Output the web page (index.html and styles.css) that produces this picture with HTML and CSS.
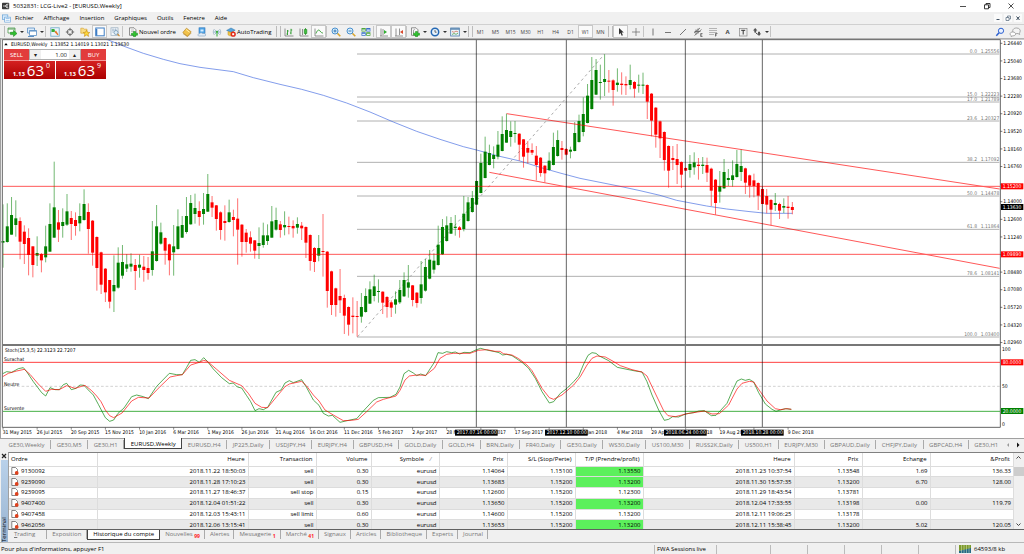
FILE: index.html
```html
<!DOCTYPE html>
<html lang="fr">
<head>
<meta charset="utf-8">
<title>5032831: LCG-Live2 - [EURUSD,Weekly]</title>
<link rel="stylesheet" href="styles.css">
</head>
<body>
<div class="app">
  <header class="titlebar">
    <svg class="app-icon" viewBox="0 0 10 10"><rect x="0" y="1" width="9" height="8" rx="1" fill="#3a3a3a"/><path d="M1.500 5h2M5 3.500l3-1M5 5h2.500M5 6.500l3 1" stroke="#fff" stroke-width="1"/><circle cx="4.500" cy="5" r="1" fill="#fff"/></svg>
    <h1 class="title">5032831: LCG-Live2 - [EURUSD,Weekly]</h1>
    <div class="win-controls">
      <button aria-label="Réduire"><svg viewBox="0 0 8 8"><path d="M1 4.500h6" stroke="#222" stroke-width=".8"/></svg></button>
      <button aria-label="Restaurer"><svg viewBox="0 0 8 8"><path d="M1.500 2.800h4v4h-4zM3 2.800V1.500h4v4H5.500" fill="none" stroke="#222" stroke-width=".9"/></svg></button>
      <button aria-label="Fermer"><svg viewBox="0 0 8 8"><path d="M1.500 1.500l5 5M6.500 1.500l-5 5" stroke="#222" stroke-width=".8"/></svg></button>
    </div>
  </header>

  <nav class="menubar">
    <svg class="menu-icon" viewBox="0 0 10 10"><rect x=".5" y="1" width="6" height="5" fill="#d8ebfb" stroke="#5b9bd5" stroke-width=".7"/><rect x="3" y="3.500" width="6.500" height="5.500" fill="#fff" stroke="#5b9bd5" stroke-width=".7"/><path d="M4 5h4.500M4 7h4.500" stroke="#7ab3e6" stroke-width=".8"/></svg>
    <button>Fichier</button><button>Affichage</button><button>Insertion</button><button>Graphiques</button><button>Outils</button><button>Fenetre</button><button>Aide</button>
    <div class="doc-controls">
      <button aria-label="Réduire le graphique"><svg viewBox="0 0 8 8"><path d="M2.500 5.500h3" stroke="#456" stroke-width="1"/></svg></button>
      <button aria-label="Restaurer le graphique"><svg viewBox="0 0 8 8"><path d="M2 3.500h3v3H2zM3.500 3.500V2h3v3H5" fill="none" stroke="#678" stroke-width=".8"/></svg></button>
      <button aria-label="Fermer le graphique"><svg viewBox="0 0 8 8"><path d="M2.500 2.500l3 3.500M5.500 2.500l-3 3.500" stroke="#345" stroke-width="1"/></svg></button>
    </div>
  </nav>

  <div class="toolbar" role="toolbar">
    <span class="grip"></span>
    <button class="drop" aria-label="Nouveau graphique"><svg viewBox="0 0 10 10"><path d="M1 1h7v5H1z" fill="#fff" stroke="#4f9a4f" stroke-width=".8"/><path d="M1 2h7" stroke="#4f9a4f"/><path d="M3.500 5.200h3V3.300L10 6.500 6.500 9.500V7.600h-3z" fill="#2fbf2f" stroke="#158015" stroke-width=".5"/></svg></button>
    <button class="drop" aria-label="Profils"><svg viewBox="0 0 10 10"><path d="M.5 1h7v5h-7z" fill="#dcecfa" stroke="#5b8fc4" stroke-width=".8"/><path d="M2.500 3.500h7v5h-7z" fill="#fff" stroke="#5b8fc4" stroke-width=".8"/><path d="M2.500 4h7M1 9.500h6" stroke="#5b8fc4"/></svg></button>
    <span class="sep"></span>
    <button aria-label="Fenêtre de marché"><svg viewBox="0 0 10 10"><rect x=".8" y=".8" width="8.400" height="8.400" fill="#eaf5fb" stroke="#6aa7c8" stroke-width=".8"/><path d="M2 4.500l1.700-2.500 1.600 2.500z" fill="#2aa52a"/><path d="M1.500 2h3v3h-3z" fill="#38ad38"/><path d="M4.500 5l1.500-1.500 2.500 4-1 .8z" fill="#e8762c"/></svg></button>
    <button aria-label="Données"><svg viewBox="0 0 10 10"><circle cx="5" cy="5" r="2.800" fill="none" stroke="#555" stroke-width=".8"/><path d="M5 .8v3M5 6.200v3M.8 5h3M6.200 5h3" stroke="#555" stroke-width=".8"/></svg></button>
    <button aria-label="Navigateur"><svg viewBox="0 0 10 10"><path d="M.8 1.200h2.500l.8 1H7v4H.8z" fill="#f8dc84" stroke="#d5a02a" stroke-width=".6"/><path d="M6.500 3.200l1 2.100 2.300.2-1.800 1.500.6 2.400-2.100-1.300-2.200 1.300.6-2.400L3.200 5.500l2.300-.2z" fill="#ffd83a" stroke="#c58d16" stroke-width=".6"/></svg></button>
    <button class="on" aria-label="Terminal"><svg viewBox="0 0 10 10"><rect x=".8" y="1" width="8.400" height="7.800" fill="#fff" stroke="#3d7cc4"/><path d="M1.500 2v6.500" stroke="#3d7cc4" stroke-width="1.600"/></svg></button>
    <button aria-label="Testeur"><svg viewBox="0 0 10 10"><rect x="1" y=".8" width="7" height="7.500" fill="#f4f8fb" stroke="#93a9bd" stroke-width=".7"/><path d="M2 3h5M3 1.500V6M5.500 1.500v3" stroke="#8aa6bf" stroke-width=".6"/><circle cx="6" cy="5.500" r="2" fill="#dfeffa" stroke="#6c8fae" stroke-width=".7"/><path d="M7.500 7l2 2.200" stroke="#c98b33" stroke-width="1.200"/></svg></button>
    <span class="sep wide"></span>
    <button class="labelled new-order"><svg viewBox="0 0 10 10"><path d="M1.500.8h4.500l2 2v5.500H1.500z" fill="#f8f8f8" stroke="#666" stroke-width=".7"/><path d="M3 3h3M3 4.500h3" stroke="#888" stroke-width=".5"/><path d="M5.500 4.500h2v1.700h2v2h-2V9.800h-2V8.200h-2v-2h2z" fill="#2fc52f" stroke="#178017" stroke-width=".5"/></svg>Nouvel ordre</button>
    <button aria-label="MetaEditor"><svg viewBox="0 0 10 10"><path d="M.8 5.500L4.500 1.200l4.700 3.600-3.700 4.400z" fill="#f2c24a" stroke="#b07c14" stroke-width=".6"/><path d="M1 6.500l4.500 3.200L9.200 6" fill="none" stroke="#c08a1c" stroke-width=".7"/><path d="M4 2.500l3.500 2.700" stroke="#fff0b0"/></svg></button>
    <button aria-label="VPS"><svg viewBox="0 0 10 10"><rect x="2" y=".8" width="6" height="5.500" fill="#4ea3e6" stroke="#2a74b8" stroke-width=".6"/><path d="M3.500 2.500h3v2h-3z" fill="#d6eeff"/><path d="M1.500 9c-1-.8-.5-2.300 1-2.300.8-1.200 2.800-1 3.300 0 1.400-.7 3 .3 2.900 1.300 0 .6-.5 1-1.200 1z" fill="#e4eef8" stroke="#7c9dbd" stroke-width=".6"/></svg></button>
    <button aria-label="Signaux"><svg viewBox="0 0 10 10"><path d="M2.500 2a4.200 4.200 0 0 0 0 6M7.500 2a4.200 4.200 0 0 1 0 6" fill="none" stroke="#9fb3c6" stroke-width=".9"/><path d="M3.700 3.300a2.500 2.500 0 0 0 0 3.500M6.300 3.300a2.500 2.500 0 0 1 0 3.500" fill="none" stroke="#6699bb" stroke-width=".8"/><circle cx="5" cy="4.800" r="1.100" fill="#35aa35"/><path d="M5 5v4.500" stroke="#35aa35"/></svg></button>
    <button class="labelled auto"><svg viewBox="0 0 10 10"><path d="M.6 3.400L5 1l4.200 2.200L5 5.200z" fill="#58a6dc" stroke="#2a6fa4" stroke-width=".5"/><path d="M2 4.500v3.300c1.500 1.400 4 1.400 5.500 0V4.500L5 5.600z" fill="#f0c648" stroke="#b88a1c" stroke-width=".5"/><circle cx="7.200" cy="7.200" r="2.600" fill="#e02818"/><path d="M6.200 6.200h2v2h-2z" fill="#fff"/></svg>AutoTrading</button>
    <span class="grip"></span>
    <button aria-label="Barres"><svg viewBox="0 0 10 10"><path d="M1 1.500v7.500M1 9h8.500" stroke="#777" stroke-width=".8"/><path d="M3.500 3v5M2.500 7h1M3.500 4h1.200M7 1.800v5.500M6 6h1M7 3h1.200" stroke="#2a9a2a" stroke-width=".9"/></svg></button>
    <button aria-label="Chandeliers"><svg viewBox="0 0 10 10"><path d="M1 1.500v7.500M1 9h8.500M3.500 2v6" stroke="#777" stroke-width=".8"/><path d="M6.500 1v7" stroke="#2a9a2a" stroke-width=".8"/><path d="M5.300 2.500h2.500v4H5.300z" fill="#3fbf3f" stroke="#1b861b" stroke-width=".6"/></svg></button>
    <button class="on" aria-label="Ligne"><svg viewBox="0 0 10 10"><path d="M1 1.500v7.500M1 9h8.500" stroke="#777" stroke-width=".8"/><path d="M2 6.500c1.500-4 3-4 4-2.500s2 2 3 2" fill="none" stroke="#2a9a2a" stroke-width=".9"/></svg></button>
    <span class="sep"></span>
    <button aria-label="Zoom avant"><svg viewBox="0 0 10 10"><path d="M6.300 6.300l3 3" stroke="#d9a52c" stroke-width="1.600"/><circle cx="4" cy="4" r="3" fill="#d8eefc" stroke="#3a86c8" stroke-width=".9"/><path d="M2.500 4h3M4 2.500v3" stroke="#2a70b0" stroke-width=".9"/></svg></button>
    <button aria-label="Zoom arrière"><svg viewBox="0 0 10 10"><path d="M6.300 6.300l3 3" stroke="#d9a52c" stroke-width="1.600"/><circle cx="4" cy="4" r="3" fill="#d8eefc" stroke="#3a86c8" stroke-width=".9"/><path d="M2.500 4h3" stroke="#2a70b0" stroke-width=".9"/></svg></button>
    <button aria-label="Mosaïque"><svg viewBox="0 0 10 10"><path d="M.5 1h4.200v3.600H.5zM5.200 5.200h4.200v3.600H5.200z" fill="#4fa63a"/><path d="M5.200 1h4.200v3.600H5.200zM.5 5.200h4.200v3.600H.5z" fill="#3a70c8"/><path d="M1.200 2.500h2.800v1.200H1.200zM6 2.500h2.800v1.200H6zM1.200 6.700h2.800v1.200H1.200zM6 6.700h2.800v1.200H6z" fill="#e8f2ff"/></svg></button>
    <span class="sep wide"></span>
    <button class="on" aria-label="Défilement"><svg viewBox="0 0 10 10"><path d="M2 1.500v7.500M1 9h8M4 2v6" stroke="#777" stroke-width=".8"/><path d="M5 3l3 2-3 2z" fill="#2fae2f"/></svg></button>
    <button class="on" aria-label="Décalage"><svg viewBox="0 0 10 10"><path d="M2 1.500v7.500M1 9h8M5.500 1.500v6.500" stroke="#777" stroke-width=".8"/><path d="M9 3L6 5l3 2z" fill="#d8482c"/></svg></button>
    <span class="sep"></span>
    <button class="drop" aria-label="Indicateurs"><svg viewBox="0 0 10 10"><path d="M1.500.8h4.500l2 2v5.500H1.500z" fill="#f8f8f8" stroke="#666" stroke-width=".7"/><path d="M4.500 2.500c-1 0-1 1-1 2v2" fill="none" stroke="#555" stroke-width=".6"/><path d="M5.500 4.500h2v1.700h2v2h-2V9.800h-2V8.200h-2v-2h2z" fill="#2fc52f" stroke="#178017" stroke-width=".5"/></svg></button>
    <button class="drop" aria-label="Périodes"><svg viewBox="0 0 10 10"><circle cx="5" cy="5" r="3.700" fill="#e9f3fc" stroke="#2468b4" stroke-width="1.500"/><path d="M5 3v2.200h1.600" fill="none" stroke="#333" stroke-width=".7"/></svg></button>
    <button class="drop" aria-label="Modèles"><svg viewBox="0 0 10 10"><rect x=".7" y="1" width="8.600" height="8" fill="#eef5fb" stroke="#4678a8" stroke-width=".8"/><path d="M.7 2h8.600" stroke="#4678a8" stroke-width="1.300"/><path d="M2 4.500l2 .8 2-1.200 2 .8" fill="none" stroke="#d06040" stroke-width=".7"/><path d="M2 7.500l2-1 2 .8 2-1" fill="none" stroke="#3c9a3c" stroke-width=".7"/></svg></button>
    <span class="grip"></span>
    <button class="tf">M1</button><button class="tf">M5</button><button class="tf">M15</button><button class="tf">M30</button><button class="tf">H1</button><button class="tf">H4</button><button class="tf">D1</button><button class="tf on">W1</button><button class="tf">MN</button>
    <span class="grip"></span>
    <button class="on" aria-label="Curseur"><svg viewBox="0 0 10 10"><path d="M3 1l4.800 4.500H5.700l1.200 2.800-1.200.5-1.200-2.800L3 7.500z" fill="#333"/></svg></button>
    <button aria-label="Réticule"><svg viewBox="0 0 10 10"><path d="M5 1v8M1 5h8" stroke="#666" stroke-width=".7"/></svg></button>
    <span class="sep"></span>
    <button aria-label="Ligne verticale"><svg viewBox="0 0 10 10"><path d="M5 1.500v7" stroke="#555" stroke-width=".8"/></svg></button>
    <button aria-label="Ligne horizontale"><svg viewBox="0 0 10 10"><path d="M2 5.500h6" stroke="#555" stroke-width=".8"/></svg></button>
    <button aria-label="Ligne de tendance"><svg viewBox="0 0 10 10"><path d="M2 8l6-6" stroke="#555" stroke-width=".8"/></svg></button>
    <button aria-label="Canal"><svg viewBox="0 0 10 10"><path d="M1 6l6-5M1.500 8.500l7-6M3 2.500v5M5 1.500v5M1.500 4.500h6" stroke="#555" stroke-width=".7"/><path d="M9.500 6.500H7.700v3h1.800M7.700 8h1.500" fill="none" stroke="#333" stroke-width=".6"/></svg></button>
    <button aria-label="Fibonacci"><svg viewBox="0 0 10 10"><path d="M1 1.500h8M1 3.500h8M1 5.500h8M1 7.500h5" stroke="#999" stroke-width=".7"/><path d="M9.500 6.500H7.500v3M7.500 8h1.500" fill="none" stroke="#333" stroke-width=".6"/></svg></button>
    <button class="letter" aria-label="Texte">A</button>
    <button aria-label="Étiquette"><svg viewBox="0 0 10 10"><rect x="1.500" y="1.500" width="7.500" height="7.500" fill="none" stroke="#888" stroke-width=".7"/><path d="M3.200 3.300h4M5.200 3.300v4.200" stroke="#333"/></svg></button>
    <button class="drop" aria-label="Flèches"><svg viewBox="0 0 10 10"><path d="M1 3.500L3.200 1l2.200 2.500H4.200v2H2.300v-2zM5 6.500h1V4.700h2v1.800h1.200L7 9z" fill="#555"/><path d="M3.500 5.500l2 2" stroke="#555"/></svg></button>
    <span class="sep line"></span>
    <div class="toolbar-right">
      <button aria-label="Rechercher"><svg viewBox="0 0 10 10"><circle cx="6" cy="3.800" r="2.600" fill="#eaf2ff" stroke="#2a5fd0" stroke-width="1"/><path d="M4 5.800L1.300 8.700" stroke="#2a5fd0" stroke-width="1.500"/></svg></button>
      <button aria-label="Messages"><svg viewBox="0 0 12 10"><path d="M4 5.500c-1-2.500.5-4.500 3.500-4.500S11.800 3 11 5c-.3.800-.7 1.300-.3 2.500L9 6.500c-1 .2-1.500.1-2 0" fill="#f4f4f4" stroke="#888" stroke-width=".7"/><path d="M1 7c0-1.400 1.300-2 2.800-2s2.800.7 2.800 2-1.300 1.800-2.800 1.800L2.200 9.600V8.500C1.500 8.200 1 7.700 1 7z" fill="#fff" stroke="#888" stroke-width=".7"/></svg></button>
    </div>
  </div>

  <main class="chart">
    <svg class="plot" viewBox="0 114 3072 1200" preserveAspectRatio="xMinYMin meet" role="img" aria-label="EURUSD hebdomadaire">
      <rect x="0" y="114" width="3072" height="5" fill="#b4b4b4"/>
      <rect x="0" y="114" width="3" height="1200" fill="#a0a0a0"/>
      <g id="fib"></g>
      <g fill="none" stroke="#4169e1" stroke-width="3" opacity=".65">
        <path d="M320 118L375 140 430 160 490 178 540 191 600 202 700 215 760 233 840 253 905 268 970 286 1040 309 1110 336 1180 366 1250 394 1320 418 1390 440 1430 450 1495 468 1560 483 1620 502 1680 519 1740 535 1800 547 1860 559 1920 572 1980 586 2030 601 2120 618 2180 627 2250 635 2300 640 2377 640"/>
      </g>
      <path d="M1073 1010L1813 163" stroke="#aaa" stroke-width="3" stroke-dasharray="8 9" fill="none"/>
      <g id="candles"></g>
      <g stroke="#f00" stroke-width="3" opacity=".65"><path d="M1520 341L2999 567M1468 517L2999 805"/><path d="M9 559H3000M9 763H3000"/></g>
      <g fill="none" stroke-width="3">
        <path d="M9 1087H3000" stroke="#ff4040"/><path d="M9 1159H3000" stroke="#bbb" stroke-width="2" stroke-dasharray="8 6"/><path d="M9 1234H3000" stroke="#45b045"/>
      </g>
      <g id="stoch" fill="none" stroke-width="3" stroke-linejoin="round"></g>
      <path d="M1429 119V1281M1699 119V1281M2056 119V1281M2287 119V1281" stroke="#000" stroke-width="3" opacity=".6"/>
      <path d="M7 119V1282M7 119H3001V1282H7" fill="none" stroke="#666" stroke-width="3"/>
      <path d="M7 1035H3001" stroke="#777" stroke-width="6"/>
      <g id="axis" class="axis"></g>
      <g class="axis">
        <text x="15" y="1056">Stoch(15,3,5) 22.3123 22.7207</text><text x="12" y="1084">Surachat</text><text x="12" y="1157">Neutre</text><text x="12" y="1230">Survente</text>
        <path d="M13 136l5-7 5 7z"/><text x="33" y="137">EURUSD,Weekly&#160; 1.13852 1.14019 1.13021 1.13630</text>
      </g>
    </svg>
    <form class="one-click">
      <button type="button" class="side">SELL</button>
      <div class="volume"><button type="button" aria-label="Moins">▾</button><input type="text" value="1.00" aria-label="Volume"><button type="button" aria-label="Plus">▴</button></div>
      <button type="button" class="side">BUY</button>
      <div class="quote"><span class="small">1.13</span><span class="big">63</span><span class="sup">0</span></div>
      <div class="quote"><span class="small">1.13</span><span class="big">63</span><span class="sup">9</span></div>
    </form>
  </main>

  <nav class="chart-tabs">
    <button>GE30,Weekly</button><button>GE30,M5</button><button>GE30,H1</button><button class="current">EURUSD,Weekly</button><button>EURUSD,H4</button><button>JP225,Daily</button><button>USDJPY,H4</button><button>EURJPY,H4</button><button>GBPUSD,H4</button><button>GOLD,Daily</button><button>GOLD,H4</button><button>BRN,Daily</button><button>FR40,Daily</button><button>GE30,Daily</button><button>WS30,Daily</button><button>US100,M30</button><button>RUSS2K,Daily</button><button>US500,H1</button><button>EURJPY,M30</button><button>GBPAUD,Daily</button><button>CHFJPY,Daily</button><button>GBPCAD,H4</button><button>GE30,H1</button>
    <span class="tab-scroll"><button class="dim" aria-label="Précédent"><svg viewBox="0 0 8 8"><path d="M5 2L3 4l2 2z" fill="#999"/></svg></button><button aria-label="Suivant"><svg viewBox="0 0 8 8"><path d="M3 1.500L5.500 4 3 6.500z" fill="#111"/></svg></button></span>
  </nav>

  <section class="terminal">
    <div class="handle">
      <button aria-label="Fermer le terminal"><svg viewBox="0 0 8 8"><path d="M2 2l4 4M6 2L2 6" stroke="#222" stroke-width="1.200"/></svg></button>
      <span>Terminal</span>
    </div>
    <div class="panel">
      <div class="history">
        <div class="table-wrap">
        <table>
          <colgroup><col class="c9"><col class="c15"><col class="c7"><col class="c5"><col class="c7"><col class="c7"><col class="c7"><col class="c7"><col class="c15"><col class="c7"><col class="c7"><col class="c8"></colgroup>
          <thead><tr><th>Ordre</th><th>Heure</th><th>Transaction</th><th>Volume</th><th>Symbole <i>/</i></th><th>Prix</th><th>S/L (Stop/Perte)</th><th>T/P (Prendre/profit)</th><th>Heure</th><th>Prix</th><th>Echange</th><th>&amp;Profit</th></tr></thead>
          <tbody id="orders"></tbody>
        </table>
        </div>
        <div class="scroll"><svg viewBox="0 0 9 9"><path d="M2.500 5.500l2-2 2 2" fill="none" stroke="#444"/></svg><span class="thumb"></span><svg viewBox="0 0 9 9"><path d="M2.500 3.500l2 2 2-2" fill="none" stroke="#444"/></svg></div>
      </div>
      <nav class="term-tabs">
        <button class="first"><u>T</u>rading</button><button>Exposition</button><button class="current">Historique du compte</button><button>Nouvelles <b>99</b></button><button>Alertes</button><button>Messagerie <b>1</b></button><button>Marché <b>41</b></button><button>Signaux</button><button>Articles</button><button>Bibliotheque</button><button>Experts</button><button>Journal</button>
      </nav>
    </div>
  </section>

  <footer class="status">
    <span class="help">Pour plus d'informations, appuyer F1</span>
    <span class="profile">FWA Sessions live</span>
    <span class="cell"></span><span class="cell"></span><span class="cell"></span><span class="cell"></span><span class="cell"></span><span class="cell"></span>
    <span class="net"><svg viewBox="0 0 12 8"><path d="M0 0h12v4L0 6z" fill="#7d9a2c"/><path d="M0 6l12-3v5H0z" fill="#256a86"/><path d="M2.500 0v8M5 0v8M7.500 0v8M10 0v8" stroke="#dfe8c8" stroke-width=".5"/></svg>64593/8 kb</span>
  </footer>
</div>
<script src="chart.js"></script>
</body>
</html>
```
FILE: styles.css
```css
* { box-sizing: border-box; }

body {
  margin: 0;
  background: #f0f0f0;
  color: #000;
  font: 6px/10px "Open Sans", "Noto Sans", sans-serif;
}

button, input {
  margin: 0;
  padding: 0;
  border: 0;
  background: none;
  color: inherit;
  font: inherit;
}

.app {
  display: flex;
  flex-direction: column;
  height: 100vh;
  overflow: hidden;
}

/* Title and menu */
.titlebar {
  display: flex;
  align-items: center;
  flex: none;
  height: 12px;
  padding-left: 2px;
  background: #fff;
}
.app-icon { width: 8px; height: 8px; }
.title { margin: 0 0 0 3px; font-size: 6px; font-weight: 400; }
.win-controls { display: flex; gap: 16px; margin-left: auto; padding-right: 9px; }
.win-controls svg, .doc-controls svg { display: block; width: 8px; height: 8px; }

.menubar {
  display: flex;
  align-items: center;
  flex: none;
  height: 12px;
  padding-left: 2px;
}
.menu-icon { width: 9px; height: 9px; margin-right: 4px; }
.menubar > button { margin-right: 10px; }
.doc-controls { display: flex; gap: 2px; margin-left: auto; padding-right: 2px; }
.doc-controls button { background: #fafafa; }

/* Toolbar */
.toolbar {
  display: flex;
  align-items: center;
  flex: none;
  height: 14px;
  border-top: 1px solid #d0d0d0;
}
.toolbar button {
  display: flex;
  align-items: center;
  justify-content: center;
  flex: none;
  width: 15px;
  height: 13px;
}
.toolbar svg { flex: none; width: 10px; height: 10px; }
.toolbar .on { border: 1px solid #c8c8c8; background: #fafafa; }
.toolbar .drop { width: 20px; gap: 3px; }
.toolbar .drop::after {
  content: "";
  border: 2px solid transparent;
  border-top-color: #333;
  border-bottom: 0;
}
.toolbar .labelled { justify-content: flex-start; gap: 1px; padding-left: 3px; }
.toolbar .new-order { width: 54px; }
.toolbar .auto { width: 52px; padding-left: 2px; }
.toolbar .tf { color: #444; font-size: 5px; }
.toolbar .letter { color: #444; font-weight: 700; }
.grip { flex: none; width: 5px; height: 11px; border-left: 1px solid #bbb; border-right: 1px solid #bbb; }
.grip:first-child { border-left-color: transparent; }
.sep { flex: none; width: 2px; height: 11px; border-left: 1px solid #c4c4c4; }
.sep.wide { width: 3px; }
.toolbar-right { display: flex; margin-left: auto; padding-right: 2px; }
.toolbar-right button:last-child svg { width: 12px; }

/* Chart */
.chart {
  position: relative;
  flex: 1;
  min-height: 0;
  background: #fff;
}
.plot { display: block; width: 100%; height: 100%; }
.axis text, .fib text {
  font-family: "DejaVu Sans Condensed", "DejaVu Sans", sans-serif;
  font-size: 15px;
}
.fib text { fill: #777; text-anchor: end; }
.axis .tag { fill: #fff; }

.one-click {
  position: absolute;
  top: 11px;
  left: 4px;
  display: grid;
  grid-template: 12px 18px / 25px 26px 26px 25px;
  width: 103px;
  color: #fff;
}
.side { background: #e23c3c; border-bottom: 1px solid #f39a9a; }
.volume {
  display: flex;
  grid-column: 2 / 4;
  height: 11px;
  border: 1px solid #b0b0b0;
  background: #f0f0f0;
  color: #222;
}
.volume button { width: 11px; }
.volume input { flex: 1; min-width: 0; padding-right: 2px; background: #fff; text-align: right; }
.quote {
  display: flex;
  align-items: flex-end;
  justify-content: flex-end;
  grid-column: span 2;
  gap: 2px;
  height: 18px;
  padding-right: 5px;
  background: linear-gradient(#d42020, #ac0000);
}
.quote + .quote { border-left: 1px solid #fff; }
.quote .small { font-weight: 700; }
.quote .big { font-size: 15px; line-height: 18px; }
.quote .sup { align-self: flex-start; font-size: 7px; }

/* Chart tabs */
.chart-tabs {
  display: flex;
  flex: none;
  height: 12px;
  padding: 1px 2px 1px 3px;
  border-top: 1px solid #a0a0a0;
}
.chart-tabs > button {
  flex: 1 0 auto;
  border-right: 1px solid #aaa;
  color: #777;
  line-height: 10px;
}
.chart-tabs > button.current {
  margin-top: -2px;
  padding-top: 1px;
  border: 1px solid #444;
  border-top: 0;
  background: #fff;
  color: #000;
}
.chart-tabs > button:nth-last-child(2) { border-right: 0; }
.tab-scroll { display: flex; align-items: center; gap: 2px; }
.tab-scroll svg { display: block; width: 8px; height: 8px; }

/* Terminal */
.terminal { display: flex; flex: none; height: 92px; padding-top: 2px; }
.handle {
  display: flex;
  flex-direction: column;
  align-items: center;
  flex: none;
  width: 8px;
}
.handle button { height: 8px; }
.handle svg { display: block; width: 8px; height: 8px; }
.handle span {
  flex: 1;
  width: 7px;
  background: linear-gradient(#99b4d1, #b9d1ea);
  line-height: 7px;
  writing-mode: vertical-rl;
  transform: rotate(180deg);
}
.panel { display: flex; flex-direction: column; flex: 1; min-width: 0; }
.history {
  display: flex;
  flex: none;
  height: 78px;
  border-top: 1px solid #808080;
  border-bottom: 1px solid #606060;
  border-left: 1px solid #a0a0a0;
  background: #fff;
}
.table-wrap { flex: 1; min-width: 0; overflow: hidden; }
table { width: 100%; height: 77px; border-collapse: collapse; table-layout: fixed; }
.c9 { width: 88px; }
.c15 { width: 151px; }
.c7 { width: 68px; }
.c5 { width: 55px; }
.c8 { width: auto; }
th, td { padding: 0 2px; border-right: 1px solid #ddd; text-align: right; white-space: nowrap; }
th { height: 13px; padding-right: 3px; font-weight: 400; }
th i { margin: 0 4px; color: #888; }
th:first-child, td:first-child { text-align: left; }
td { line-height: 9px; }
tbody tr { border-top: 1px solid #dcdcdc; }
tbody tr:nth-child(even) { background: #e9e9e9; }
td.hit { background: #5cf05c; }
td svg { width: 8px; height: 8px; margin-right: 2px; vertical-align: top; }
.scroll {
  display: flex;
  flex-direction: column;
  flex: none;
  width: 10px;
  background: #f0f0f0;
}
.scroll svg { width: 9px; height: 9px; }
.scroll svg:last-child { margin-top: auto; }
.thumb { height: 9px; margin-top: 5px; background: #cdcdcd; }

.term-tabs { display: flex; height: 11px; }
.term-tabs button {
  position: relative;
  height: 9px;
  padding: 0 5px;
  border-right: 1px solid #aaa;
  color: #777;
  line-height: 9px;
}
.term-tabs .first { padding: 0 11px 0 6px; }
.term-tabs .current {
  height: 10px;
  border: 1px solid #444;
  border-top: 0;
  background: #fff;
  color: #000;
}
.term-tabs .current ~ button { padding-right: 4px; }
.term-tabs b { color: #f22; font-size: 5px; vertical-align: sub; line-height: 5px; }

/* Status bar */
.status {
  display: flex;
  align-items: center;
  flex: none;
  height: 12px;
  padding: 1px 0 0 1px;
  border-top: 1px solid #b8b8b8;
}
.help { flex: 1; }
.profile, .cell, .net { flex: none; height: 9px; border-left: 1px solid #bbb; line-height: 9px; }
.profile { width: 62px; padding-left: 2px; }
.cell { width: 37px; }
.profile + .cell { width: 54px; }
.cell:nth-last-child(2) { width: 37px; }
.net { display: flex; align-items: center; gap: 3px; width: 69px; padding-left: 3px; }
.net svg { width: 12px; height: 8px; }
```
FILE: chart.js
```js
const NS = 'http://www.w3.org/2000/svg';

function add(parent, name, attrs, text) {
  const el = document.createElementNS(NS, name);
  for (const key in attrs) el.setAttribute(key, attrs[key]);
  if (text !== undefined) el.textContent = text;
  parent.appendChild(el);
  return el;
}

const byId = id => document.getElementById(id);
const WEEK = 12.8;
const barX = i => 9 + i * WEEK;

/* Weekly bars: direction, high, body top, body bottom, low, relative to the run's base. */
const runs = [
  { first: 0, base: 450, bars: `g163 273 278 353,g160 229 276 278,g141 195 254 254,g151 205 225 260,r202 213 275 328,r226 245 282 342,r235 264 315 376,r289 289 345 382,g259 309 317 348,r309 312 331 367,g227 289 322 337,g160 222 305 305,g35 172 263 263,r180 217 239 276,g175 216 228 263,g132 184 224 228,r183 204 222 270,r187 210 228 257,g160 198 220 244,g118 162 210 212,r160 186 237 311,r210 212 308 347,r259 261 354 422,r305 307 404 432,r354 356 427 456,r390 390 455 475,g316 405 424 486,g292 338 413 416,g285 336 377 386,g312 343 356 366,g310 341 350 365,r327 345 363 420,g314 344 353 383,r318 350 360 395,r321 354 369 389,g213 304 360 377,g165 229 333 335,g218 247 281 284,r262 264 302 344,r281 283 331 376,g225 289 307 377,g178 229 297 299,g198 225 263 264,g141 198 246 251,g135 159 223 224,g131 174 192 221,r154 183 201 227,g129 177 192 224,g72 132 185 186,r138 157 173 201,r165 166 207 242,r184 187 240 269,r166 213 219 272,g149 187 216 218,r179 201 210 259,r145 206 239 344,r222 224 276 320,r237 248 276 308,r244 262 281 305,r270 271 302 326` },
  { first: 60, base: 570, bars: `g112 159 168 207,g98 136 165 173,g103 136 153 165,g48 94 143 143,g53 90 119 122,r93 103 120 143,g64 105 112 136,r80 108 111 133,r91 108 115 143,g82 102 113 131,r96 107 115 150,r109 111 158 204,r133 135 213 242,r171 174 216 246,g135 174 197 214,r72 183 186 260,r183 185 303 353,r242 244 345 375,r293 295 345 380,r237 318 331 369,r314 324 377 432,r349 351 404 437,r322 377 381 430,r333 378 381 440,g309 351 380 398,g295 318 366 368,g274 298 341 342,g254 289 318 334,g268 303 306 338,r304 305 338 372,r318 321 351 383,r331 337 353 381,g304 328 344 371,g270 300 337 342,g247 270 319 321,g225 277 293 323,r285 286 330 349,r306 308 339 353,g213 283 324 341,g207 231 302 305,g180 209 266 268,g190 212 239 251,g107 164 225 227,g87 111 193 195,g79 106 153 155,g81 99 131 132,g75 110 114 137,r108 112 120 143,g18 71 117 124,g21 37 93 95,g3 24 66 68` },
  { first: 111, base: 150, bars: `g392 393 464 464,g311 339 429 430,g260 305 384 385,g284 309 345 346,g289 315 327 355,g243 284 320 328,g199 252 303 304,g191 240 278 278,g214 243 261 290,g213 249 252 278,r250 251 284 332,r267 268 320 353,r273 294 308 340,r280 300 308 315,r288 317 345 391,r321 323 369 380,r345 347 370 397,g307 332 360 363,g248 291 345 346,g241 270 318 320,r273 294 300 329,r294 297 314 316,g290 299 305 325,g216 249 303 304,g194 213 276 278,g142 192 246 259,g102 137 219 220,g21 90 177 179,g27 60 134 135,g44 96 99 149,g13 87 96 138,r60 92 95 128,r88 91 120 167,g55 98 105 125,r67 101 105 134,r79 102 106 135,g44 90 105 118,r93 96 116 143,g74 104 107 128,g68 104 107 132,r103 105 155 207,r129 131 212 259,r171 173 254 293,r212 214 265 324,r244 246 330 362,r286 288 362 413,r288 324 330 360` },
  { first: 158, base: 240, bars: `r192 237 255 312,r244 246 284 324,r262 264 272 272,g225 252 270 293,g217 247 262 284,r234 254 258 299,g231 254 258 282,r233 255 278 306,r263 266 332 378,r297 299 369 404,g273 318 335 368,g237 276 325 327,g267 294 300 318,g241 286 300 320,g210 252 291 293,g208 258 276 303,r263 265 308 342,r284 286 317 353,r281 301 318 352,r307 309 347 390,r320 327 372 372,r327 348 374 400,r357 360 389 436,g339 369 375 393,r368 372 392 417,g355 378 383 399,r348 380 384 416,r366 381 390 403` }
];

for (const run of runs) {
  run.bars.split(',').forEach((bar, n) => {
    const color = bar[0] === 'g' ? '#008000' : '#ff0000';
    const [high, top, bottom, low] = bar.slice(1).split(' ').map(v => Number(v) + run.base);
    const x = barX(run.first + n);
    add(byId('candles'), 'path', { d: `M${x} ${high}V${low}`, stroke: color, 'stroke-width': 3, opacity: 0.55 });
    add(byId('candles'), 'rect', { x: x - 4.5, y: top, width: 9, height: Math.max(3, bottom - top), fill: color });
  });
}

/* Fibonacci retracement */
const fib = byId('fib');
fib.setAttribute('class', 'fib');
[[162, '0.0', '1.25556'], [291, '15.0', '1.22223'], [306, '17.0', '1.21789'], [363, '23.6', '1.20327'], [487, '38.2', '1.17092'],
 [588, '50.0', '1.14478'], [688, '61.8', '1.11864'], [829, '78.6', '1.08141'], [1011, '100.0', '1.03400']].forEach(([y, ratio, price]) => {
  add(fib, 'path', { d: `M1071 ${y}H2998`, stroke: '#b0b0b0', 'stroke-width': 3 });
  add(fib, 'text', { x: 2931, y: y - 3 }, ratio);
  add(fib, 'text', { x: 2998, y: y - 3 }, price);
});

/* Price scale */
const axis = byId('axis');
function tag(x, y, width, fill, label) {
  add(axis, 'rect', { x, y: y - 9, width, height: 18, fill });
  add(axis, 'text', { x: x + 5, y: y + 5, class: 'tag' }, label);
}
['1.26440', '1.25040', '1.23680', '1.22280', '1.20920', '1.19520', '1.18160', '1.16760', '', '1.14000', '1.12600', '1.11240', '',
 '1.08480', '1.07080', '1.05720', '1.04320', '1.02960'].forEach((label, n) => {
  const y = 130 + n * 52.8;
  add(axis, 'path', { d: `M3001 ${y}h6`, stroke: '#333', 'stroke-width': 2 });
  add(axis, 'text', { x: 3010, y: y + 5 }, label);
});
[['100', 1048], ['50', 1160], ['0', 1272]].forEach(([label, y]) => add(axis, 'text', { x: 3006, y: y + 5 }, label));
tag(3003, 559, 67, '#f00', '1.15200');
tag(3003, 621, 67, '#000', '1.13630');
tag(3003, 763, 67, '#f00', '1.09890');
tag(3003, 1087, 67, '#f00', '80.0000');
tag(3003, 1233, 67, '#008000', '20.0000');

/* Time scale, one label every eight weeks; slots fully behind a line's date tag stay empty */
['31 May 2015', '26 Jul 2015', '20 Sep 2015', '15 Nov 2015', '10 Jan 2016', '6 Mar 2016', '1 May 2016', '26 Jun 2016', '21 Aug 2016',
 '16 Oct 2016', '11 Dec 2016', '5 Feb 2017', '2 Apr 2017', '28 May 2017', '23 Jul 2017', '17 Sep 2017', '', '7 Jan 2018',
 '4 Mar 2018', '29 Apr 2018', '24 Jun 2018', '19 Aug 2018', '', '9 Dec 2018'].forEach((label, n) => {
  const x = barX(n * 8);
  add(axis, 'path', { d: `M${x} 1282v7`, stroke: '#555', 'stroke-width': 2 });
  add(axis, 'text', { x: x - 1, y: 1303 }, label);
});
[[1365, '2017.07.16 00:00'], [1635, '2017.12.10 00:00'], [1992, '2018.06.24 00:00'], [2223, '2018.10.28 00:00']]
  .forEach(([x, label]) => tag(x, 1298, 128, '#000', label));

/* Stochastic oscillator */
const main = '8 101 20 95 35 97 55 86 70 83 80 95 100 125 125 158 137 168 150 143 165 149 178 149 190 134 200 130 214 149 228 145 240 135 252 136 265 150 280 165 295 193 316 233 329 244 341 240 354 220 372 204 395 170 410 165 430 170 445 176 470 139 508 100 530 104 547 104 560 82 572 61 585 59 598 67 611 53 622 64 640 87 665 113 688 131 700 129 712 141 725 144 740 167 752 185 765 212 777 206 790 209 803 202 828 157 843 150 855 129 868 122 880 128 905 119 920 143 940 180 957 196 970 220 985 228 997 226 1020 247 1050 240 1070 236 1090 213 1120 181 1135 173 1170 172 1188 163 1200 141 1212 101 1226 91 1240 99 1250 107 1262 102 1277 107 1303 67 1314 38 1328 40 1340 35 1355 38 1366 36 1379 42 1392 37 1410 38 1430 29 1442 25 1460 30 1485 35 1497 38 1508 45 1520 43 1536 47 1566 67 1586 85 1606 115 1626 155 1648 189 1661 185 1681 160 1701 145 1721 125 1736 108 1751 72 1764 46 1776 38 1788 40 1798 48 1826 62 1852 82 1881 88 1906 93 1926 96 1941 125 1956 165 1976 210 1993 241 2006 238 2018 230 2036 231 2056 222 2081 218 2096 213 2113 212 2134 227 2148 226 2161 212 2181 190 2196 155 2211 123 2224 117 2236 121 2248 118 2261 126 2276 158 2296 192 2316 208 2328 214 2341 210 2356 206 2374 208';
const signal = '8 110 25 100 50 93 73 88 90 103 115 132 137 154 155 148 178 149 200 137 225 145 255 136 275 152 290 168 303 185 316 210 329 227 341 233 366 219 395 183 415 172 447 174 480 140 510 111 530 107 547 104 572 75 598 67 611 61 622 64 650 88 688 121 725 137 745 160 765 190 785 202 803 203 830 170 855 140 868 132 905 124 920 138 940 165 957 183 975 210 1000 225 1030 242 1055 241 1075 238 1100 215 1130 186 1150 178 1188 168 1200 151 1215 120 1228 108 1250 105 1277 106 1303 85 1320 55 1340 43 1360 40 1410 40 1435 31 1460 29 1485 34 1500 34 1510 41 1536 45 1556 56 1581 75 1596 92 1626 145 1648 173 1661 178 1686 165 1721 135 1741 110 1761 75 1776 55 1791 48 1816 51 1836 62 1861 77 1896 89 1926 96 1941 108 1961 150 1991 212 2004 227 2026 230 2066 220 2113 213 2136 222 2158 221 2186 195 2211 147 2226 130 2248 124 2261 126 2281 155 2301 183 2326 206 2341 209 2361 206 2374 208';
add(byId('stoch'), 'polyline', { points: main, transform: 'translate(0 1020)', stroke: '#008000', opacity: 0.65 });
add(byId('stoch'), 'polyline', { points: signal, transform: 'translate(0 1020)', stroke: '#ff0000', opacity: 0.65 });

/* Account history */
const orders = [
  ['9130092', '2018.11.22 18:50:03', 'sell', '0.30', 'eurusd', '1.14064', '1.15100', '1.13550', '2018.11.23 10:37:54', '1.13548', '1.69', '136.33'],
  ['9239090', '2018.11.28 17:10:23', 'sell', '0.30', 'eurusd', '1.13683', '1.15200', '1.13200', '2018.11.30 15:57:35', '1.13200', '6.70', '128.00'],
  ['9239095', '2018.11.27 18:46:37', 'sell stop', '0.15', 'eurusd', '1.12600', '1.15200', '1.12300', '2018.11.29 18:43:54', '1.13781', '', ''],
  ['9407400', '2018.12.04 01:51:22', 'sell', '0.30', 'eurusd', '1.13650', '1.15200', '1.13200', '2018.12.04 17:33:55', '1.13198', '0.00', '119.79'],
  ['9407458', '2018.12.03 15:43:11', 'sell limit', '0.60', 'eurusd', '1.14600', '1.15200', '1.13200', '2018.12.11 19:06:25', '1.13178', '', ''],
  ['9462056', '2018.12.06 13:15:41', 'sell', '0.30', 'eurusd', '1.13653', '1.15200', '1.13200', '2018.12.11 15:38:45', '1.13200', '5.02', '120.05']
];
const icon = '<svg viewBox="0 0 8 8"><path d="M.8.5h3.700l2 2v5H.8z" fill="#fff" stroke="#555" stroke-width=".7"/><circle cx="5.700" cy="5.900" r="1.900" fill="#e0401c"/></svg>';
for (const order of orders) {
  const row = byId('orders').insertRow();
  order.forEach((value, n) => {
    const cell = row.insertCell();
    cell.innerHTML = n === 0 ? icon + value : value;
    if (n === 7 && order[10] !== '') cell.className = 'hit';
  });
}
```
